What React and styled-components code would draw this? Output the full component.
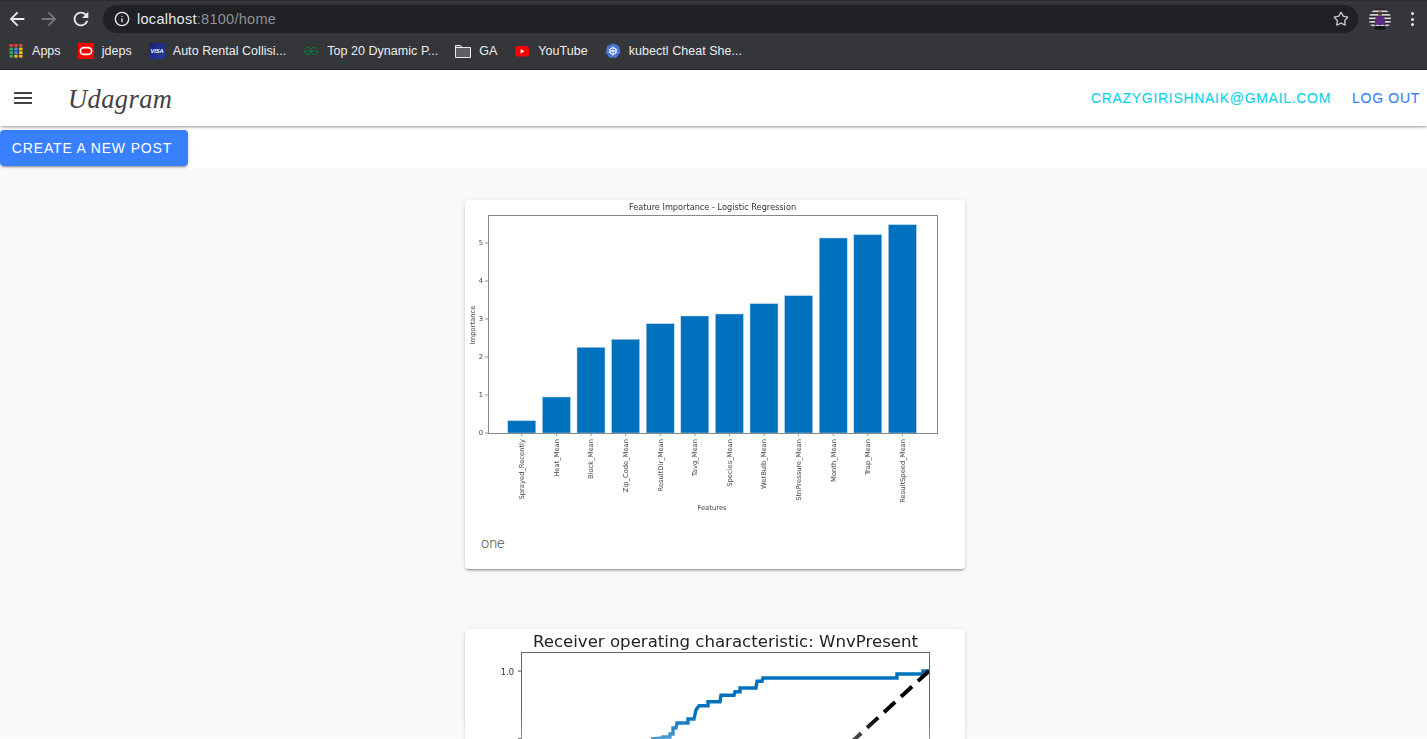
import React from "react"
import styled, { createGlobalStyle } from "styled-components"
import { Info, Star } from "lucide-react"

const GlobalStyle = createGlobalStyle`
  html, body {
    margin: 0;
    height: 100%;
    overflow: hidden;
    background: #fff;
    font-family: "Liberation Sans", Arial, sans-serif;
  }
`

const Page = styled.div`
  position: relative;
  height: 100vh;
  display: flex;
  flex-direction: column;
  overflow: hidden;
`

/* browser chrome */
const BrowserBar = styled.div`
  flex: none;
  height: 70px;
  box-sizing: border-box;
  padding-top: 5px;
  background: #35363a;
  border-top: 1px solid #2a2b2e;
  border-bottom: 1px solid #242528;
  color: #e8eaed;
`

const Toolbar = styled.div`
  height: 28px;
  margin-top: -1px;
  display: flex;
  align-items: center;
  padding-left: 1px;
`

const NavButton = styled.div`
  width: 32px;
  height: 28px;
  display: flex;
  align-items: center;
  justify-content: center;
  color: ${props => (props.$disabled ? "#75767a" : "#e8eaed")};
`

const AddressBar = styled.div`
  flex: 1;
  height: 28px;
  margin-left: 6px;
  padding: 0 9px 0 11px;
  display: flex;
  align-items: center;
  gap: 7px;
  background: #202124;
  border-radius: 14px;
  font-size: 14.5px;
  letter-spacing: 0.28px;
`

const Url = styled.div`
  flex: 1;
  span {
    color: #8f9194;
  }
`

const ProfileSlot = styled.div`
  width: 69px;
  padding-left: 11px;
  box-sizing: border-box;
  display: flex;
  align-items: center;
`

const Dots = styled.div`
  margin-left: 20px;
  display: flex;
  flex-direction: column;
  gap: 2.5px;
  i {
    width: 3px;
    height: 3px;
    border-radius: 50%;
    background: #e8eaed;
  }
`

const Bookmarks = styled.div`
  height: 34px;
  margin-top: 1px;
  padding-left: 8px;
  display: flex;
  align-items: center;
  gap: 17px;
`

const Bookmark = styled.div`
  display: flex;
  align-items: center;
  gap: 8px;
  font-size: 12.5px;
  letter-spacing: 0.04px;
  white-space: nowrap;
  color: #eceef0;
  svg {
    display: block;
    flex: none;
  }
`

/* app */
const Header = styled.header`
  position: relative;
  z-index: 2;
  flex: none;
  height: 56px;
  padding-right: 7px;
  display: flex;
  align-items: center;
  background: #fff;
  box-shadow: 0 2px 3px -1px rgba(0, 0, 0, 0.3), 0 1px 2px rgba(0, 0, 0, 0.14);
`

const MenuButton = styled.div`
  width: 46px;
  padding-left: 14px;
  box-sizing: border-box;
  color: #424242;
  svg {
    display: block;
  }
`

const Logo = styled.div`
  margin-left: 22px;
  padding-top: 2px;
  flex: 1;
  font-family: "Liberation Serif", serif;
  font-style: italic;
  font-size: 26.5px;
  letter-spacing: 0.4px;
  color: #424242;
`

const HeaderLink = styled.div`
  margin-left: 21px;
  font-size: 14px;
  letter-spacing: 0.7px;
  -webkit-text-stroke: 0.12px ${props => props.color};
  color: ${props => props.color};
`

const ActionRow = styled.div`
  flex: none;
  height: 43px;
  box-sizing: border-box;
  padding-top: 4px;
  background: #fff;
`

const PrimaryButton = styled.div`
  width: 188px;
  height: 36px;
  box-sizing: border-box;
  padding-right: 4px;
  display: flex;
  align-items: center;
  justify-content: center;
  background: #3880ff;
  border-radius: 4px;
  color: #fff;
  font-size: 14px;
  letter-spacing: 0.84px;
  box-shadow: 0 3px 1px -2px rgba(0, 0, 0, 0.2), 0 2px 2px rgba(0, 0, 0, 0.14),
    0 1px 5px rgba(0, 0, 0, 0.12);
`

const Feed = styled.main`
  flex: 1;
  min-height: 0;
  padding: 31px 0 0 3px;
  display: flex;
  flex-direction: column;
  align-items: center;
  gap: 60px;
  background: #f9f9f9;
`

const Card = styled.article`
  flex: none;
  width: 500px;
  background: #fff;
  border-radius: 4px;
  box-shadow: 0 3px 1px -2px rgba(0, 0, 0, 0.2), 0 2px 2px rgba(0, 0, 0, 0.14),
    0 1px 5px rgba(0, 0, 0, 0.12);
`

const ChartSvg = styled.svg`
  display: block;
  width: 500px;
  height: 317px;
  filter: blur(0.4px);
  text {
    font-family: "DejaVu Sans", sans-serif;
  }
`

const Caption = styled.div`
  padding: 17px 16px 15px;
  font-family: Roboto, sans-serif;
  font-weight: 300;
  font-size: 14.5px;
  line-height: 20px;
  color: #555;
`

const BottomFade = styled.div`
  position: absolute;
  left: 0;
  right: 0;
  bottom: 0;
  height: 24px;
  pointer-events: none;
  background: linear-gradient(rgba(255, 255, 255, 0), rgba(255, 255, 255, 0.3));
`

/* favicons */
const AppsIcon = () => {
  const colors = ["#ea4335", "#ea4335", "#ea4335", "#34a853", "#4285f4", "#fbbc05", "#34a853", "#4285f4", "#fbbc05", "#34a853", "#fbbc05", "#fbbc05"]
  return (
    <svg width="16" height="16" viewBox="0 0 16 16">
      {colors.map((c, i) => (
        <rect key={i} x={1.5 + (i % 3) * 4.8} y={1 + Math.floor(i / 3) * 3.6} width="3.4" height="2.8" fill={c} />
      ))}
    </svg>
  )
}

const OracleIcon = () => (
  <svg width="16" height="16" viewBox="0 0 16 16">
    <rect width="16" height="16" fill="#f80000" />
    <rect x="2.4" y="4.6" width="11.2" height="6.8" rx="3.4" fill="none" stroke="#fff" strokeWidth="1.6" />
  </svg>
)

const VisaIcon = () => (
  <svg width="16" height="16" viewBox="0 0 16 16">
    <defs>
      <linearGradient id="visaBg" x1="0" y1="0" x2="1" y2="1">
        <stop offset="0" stopColor="#1a1f71" />
        <stop offset="1" stopColor="#2b3a9c" />
      </linearGradient>
    </defs>
    <rect width="16" height="16" fill="url(#visaBg)" />
    <text x="8" y="10" textAnchor="middle" fontSize="5.6" fontWeight="700" fontStyle="italic" fill="#fff" fontFamily="Liberation Sans, sans-serif">VISA</text>
  </svg>
)

const GeeksIcon = () => (
  <svg width="16" height="16" viewBox="0 0 16 16" fill="none" stroke="#0f7b3d" strokeWidth="1">
    <path d="M14 5.4A3.6 3.6 0 1 0 15 8H8" />
    <path d="M2 5.4A3.6 3.6 0 1 1 1 8H8" />
  </svg>
)

const FolderIcon = () => (
  <svg width="16" height="16" viewBox="0 0 16 16">
    <path d="M.5 2.5h5l1.5 2h8.5v10H.5z" fill="#5f6064" stroke="#e8eaed" />
    <path d="M.5 4.5h15" stroke="#e8eaed" />
  </svg>
)

const YoutubeIcon = () => (
  <svg width="16" height="16" viewBox="0 0 16 16">
    <rect x="1" y="3" width="14" height="10.5" rx="2.6" fill="#f00" />
    <path d="M6.6 5.9v4.6l3.9-2.3z" fill="#fff" />
  </svg>
)

const KubeIcon = () => (
  <svg width="16" height="16" viewBox="0 0 16 16">
    <path d="M8 .3l5.9 2.8 1.5 6.4-4.1 5.2H4.7L.6 9.5 2.1 3.1z" fill="#4a74d8" />
    <circle cx="8" cy="8" r="3.3" fill="none" stroke="#fff" strokeWidth="1" />
    <path d="M8 3.2v9.6M3.5 6.3l9 3.4M12.5 6.3l-9 3.4" stroke="#fff" strokeWidth=".7" />
  </svg>
)

const Avatar = () => (
  <svg width="22" height="22" viewBox="0 0 22 22">
    <clipPath id="avatarClip">
      <circle cx="11" cy="11" r="11" />
    </clipPath>
    <g clipPath="url(#avatarClip)">
      <rect width="22" height="22" fill="#2a2a2e" />
      {[2.5, 6, 9.5, 13, 16.5].map(y => (
        <rect key={y} y={y} width="22" height="1.7" fill="#d8d8d8" />
      ))}
      <path d="M5.5 18l1-8 3-2h3l3 2 1 8-3-1.5-2.5 1-2.5-1z" fill="#5a2a80" />
      <circle cx="11" cy="5.5" r="2.3" fill="#5b3f33" />
      <rect x="6" y="18" width="10" height="5" fill="#17171a" />
    </g>
  </svg>
)

/* charts, in page pixels so they can be read off the reference */
const FEATURES = [
  ["Sprayed_Recently", 420.7],
  ["Heat_Mean", 397],
  ["Block_Mean", 347.3],
  ["Zip_Code_Mean", 339.3],
  ["ResultDir_Mean", 323.7],
  ["Tavg_Mean", 316],
  ["Species_Mean", 314],
  ["WetBulb_Mean", 303.7],
  ["StnPressure_Mean", 295.7],
  ["Month_Mean", 238],
  ["Trap_Mean", 234.7],
  ["ResultSpeed_Mean", 224.7],
]

const FeatureChart = () => (
  <ChartSvg viewBox="465 200 500 317">
    <text x="712.5" y="210" textAnchor="middle" fontSize="8.2" fill="#333">Feature Importance - Logistic Regression</text>
    {[0, 1, 2, 3, 4, 5].map(n => (
      <g key={n}>
        <line x1="485" x2="488" y1={433 - n * 38} y2={433 - n * 38} stroke="#666" strokeWidth=".7" />
        <text x="483" y={435.3 - n * 38} textAnchor="end" fontSize="6.8" fill="#444">{n}</text>
      </g>
    ))}
    <text transform="translate(474.5 325) rotate(-90)" textAnchor="middle" fontSize="6.8" fill="#444">Importance</text>
    {FEATURES.map(([name, top], i) => {
      const x = 521.8 + i * 34.6
      return (
        <g key={name}>
          <rect x={x - 14} y={top} width="28" height={433 - top} fill="#0071bc" stroke="#b5d4ea" strokeWidth=".5" />
          <line x1={x} x2={x} y1="433" y2="436" stroke="#666" strokeWidth=".7" />
          <text transform={`translate(${x + 2.4} 439) rotate(-90)`} textAnchor="end" fontSize="6.75" fill="#444">{name}</text>
        </g>
      )
    })}
    <rect x="488.5" y="215.5" width="449" height="218" fill="none" stroke="#888" />
    <text x="712" y="510" textAnchor="middle" fontSize="6.8" fill="#444">Features</text>
  </ChartSvg>
)

const ROC_POINTS = "651,739 663,738 663,737 670,737 670,734 673,734 673,728 676,728 677,723 688,723 688,719 694,719 696,710 699,705.7 708,705.7 708,701.7 720,701.7 721,695.3 734,695.3 735,691.7 740,691.7 740,688 756,688 757,681.3 762,681.3 763,678 897,678 897,674 923,674 923,671 929,671"

const RocChart = () => (
  <ChartSvg viewBox="465 629 500 317">
    <text x="725.5" y="647" textAnchor="middle" fontSize="16.6" fill="#222">Receiver operating characteristic: WnvPresent</text>
    <line x1="518" x2="521.5" y1="671" y2="671" stroke="#444" />
    <text x="514" y="674.5" textAnchor="end" fontSize="8.4" fill="#333">1.0</text>
    <line x1="518" x2="521.5" y1="738.5" y2="738.5" stroke="#444" />
    <polyline points={ROC_POINTS} fill="none" stroke="#0071bc" strokeWidth="3.4" />
    <line x1="929" y1="671" x2="760" y2="826" stroke="#000" strokeWidth="4" strokeDasharray="15 8" />
    <rect x="521.5" y="652.5" width="408" height="290" fill="none" stroke="#666" />
  </ChartSvg>
)

const BACK = "M20 11H7.83l5.59-5.59L12 4l-8 8 8 8 1.41-1.41L7.83 13H20v-2z"
const FORWARD = "M4 11h12.17l-5.59-5.59L12 4l8 8-8 8-1.41-1.41L16.17 13H4v-2z"
const RELOAD = "M17.65 6.35A7.96 7.96 0 0 0 12 4c-4.42 0-7.99 3.58-7.99 8s3.57 8 7.99 8c3.73 0 6.84-2.55 7.73-6h-2.08A5.99 5.99 0 0 1 12 18c-3.31 0-6-2.69-6-6s2.69-6 6-6c1.66 0 3.14.69 4.22 1.78L13 11h7V4l-2.35 2.35z"

const NavIcon = ({ d }) => (
  <svg width="22" height="22" viewBox="0 0 24 24" fill="currentColor">
    <path d={d} />
  </svg>
)

const BOOKMARKS = [
  [AppsIcon, "Apps"],
  [OracleIcon, "jdeps"],
  [VisaIcon, "Auto Rental Collisi..."],
  [GeeksIcon, "Top 20 Dynamic P..."],
  [FolderIcon, "GA"],
  [YoutubeIcon, "YouTube"],
  [KubeIcon, "kubectl Cheat She..."],
]

export default function App() {
  return (
    <Page>
      <GlobalStyle />
      <BrowserBar>
        <Toolbar>
          <NavButton><NavIcon d={BACK} /></NavButton>
          <NavButton $disabled><NavIcon d={FORWARD} /></NavButton>
          <NavButton><NavIcon d={RELOAD} /></NavButton>
          <AddressBar>
            <Info size={16} />
            <Url>localhost<span>:8100/home</span></Url>
            <Star size={16} color="#c4c6c9" />
          </AddressBar>
          <ProfileSlot>
            <Avatar />
            <Dots><i /><i /><i /></Dots>
          </ProfileSlot>
        </Toolbar>
        <Bookmarks>
          {BOOKMARKS.map(([Icon, label]) => (
            <Bookmark key={label}><Icon />{label}</Bookmark>
          ))}
        </Bookmarks>
      </BrowserBar>

      <Header>
        <MenuButton>
          <svg width="18" height="12" viewBox="0 0 18 12" fill="currentColor">
            <rect width="18" height="2" />
            <rect y="5" width="18" height="2" />
            <rect y="10" width="18" height="2" />
          </svg>
        </MenuButton>
        <Logo>Udagram</Logo>
        <HeaderLink color="#0cd1e8">CRAZYGIRISHNAIK@GMAIL.COM</HeaderLink>
        <HeaderLink color="#3880ff">LOG OUT</HeaderLink>
      </Header>

      <ActionRow>
        <PrimaryButton>CREATE A NEW POST</PrimaryButton>
      </ActionRow>

      <Feed>
        <Card>
          <FeatureChart />
          <Caption>one</Caption>
        </Card>
        <Card>
          <RocChart />
        </Card>
      </Feed>
      <BottomFade />
    </Page>
  )
}
